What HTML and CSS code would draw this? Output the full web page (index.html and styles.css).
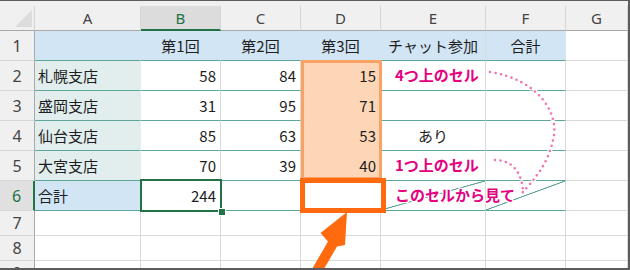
FILE: index.html
```html
<!DOCTYPE html>
<html lang="ja">
<head>
<meta charset="utf-8">
<title>Sheet</title>
<link rel="stylesheet" href="styles.css">
</head>
<body>
<div class="sheet">
  <div class="grid">
    <div class="strip"></div>

    <div class="corner"><svg class="tri" width="17" height="17" viewBox="0 0 17 17"><polygon points="17,0 17,17 0,17" fill="#dcdcdc"/></svg></div>
    <div class="ch">A</div>
    <div class="ch sel">B</div>
    <div class="ch">C</div>
    <div class="ch">D</div>
    <div class="ch">E</div>
    <div class="ch">F</div>
    <div class="ch">G</div>

    <div class="rh">1</div>
    <div class="c hd"></div>
    <div class="c hd ctr">第1回</div>
    <div class="c hd ctr">第2回</div>
    <div class="c hd ctr">第3回</div>
    <div class="c hd ctr">チャット参加</div>
    <div class="c hd ctr">合計</div>
    <div class="c"></div>

    <div class="rh">2</div>
    <div class="c br">札幌支店</div>
    <div class="c tl num">58</div>
    <div class="c tl num">84</div>
    <div class="c pe num">15</div>
    <div class="c tl"><span class="note">4つ上のセル</span></div>
    <div class="c tl"></div>
    <div class="c"></div>

    <div class="rh">3</div>
    <div class="c br">盛岡支店</div>
    <div class="c tl num">31</div>
    <div class="c tl num">95</div>
    <div class="c pe num">71</div>
    <div class="c tl"></div>
    <div class="c tl"></div>
    <div class="c"></div>

    <div class="rh">4</div>
    <div class="c br">仙台支店</div>
    <div class="c tl num">85</div>
    <div class="c tl num">63</div>
    <div class="c pe num">53</div>
    <div class="c tl ctr">あり</div>
    <div class="c tl"></div>
    <div class="c"></div>

    <div class="rh">5</div>
    <div class="c br">大宮支店</div>
    <div class="c tl num">70</div>
    <div class="c tl num">39</div>
    <div class="c pe num">40</div>
    <div class="c tl"><span class="note">1つ上のセル</span></div>
    <div class="c tl"></div>
    <div class="c"></div>

    <div class="rh sel">6</div>
    <div class="c tot">合計</div>
    <div class="c tl num">244</div>
    <div class="c tl"></div>
    <div class="c tl"></div>
    <div class="c tl diag"><span class="note">このセルから見て</span></div>
    <div class="c tl diag"></div>
    <div class="c"></div>

    <div class="rh">7</div>
    <div class="c"></div><div class="c"></div><div class="c"></div><div class="c"></div><div class="c"></div><div class="c"></div><div class="c"></div>

    <div class="rh">8</div>
    <div class="c"></div><div class="c"></div><div class="c"></div><div class="c"></div><div class="c"></div><div class="c"></div><div class="c"></div>

    <div class="rh">9</div>
    <div class="c"></div><div class="c"></div><div class="c"></div><div class="c"></div><div class="c"></div><div class="c"></div><div class="c"></div>
  </div>

  <div class="overlay">
    <div class="range"></div>
    <div class="target"></div>
    <div class="active"><span class="handle"></span></div>
    <svg class="marks" width="630" height="270" viewBox="0 0 630 270">
      <g fill="none" stroke-linecap="round" stroke-dasharray="0 5.5">
        <path d="M490,72 C540,80 560,115 553,140 C548,165 532,182 522,193" stroke="#fff" stroke-width="5"/>
        <path d="M495,160 C512,160 522,172 523,192" stroke="#fff" stroke-width="5"/>
        <path d="M490,72 C540,80 560,115 553,140 C548,165 532,182 522,193" stroke="#ef74b1" stroke-width="2.6"/>
        <path d="M495,160 C512,160 522,172 523,192" stroke="#ef74b1" stroke-width="2.6"/>
      </g>
      <polygon points="347,212 345,245 337,246.5 317,281 308,276 328,241.5 320.5,233" fill="#ff6a0e"/>
    </svg>
  </div>
</div>
</body>
</html>
```

FILE: styles.css
```css
* {
  box-sizing: border-box;
}

body {
  margin: 0;
  background: #ffffff;
}

.sheet {
  position: relative;
  width: 630px;
  height: 270px;
  border-top: 1px solid #5c5c5c;
  border-right: 2px solid #5c5c5c;
  border-bottom: 2px solid #5c5c5c;
  overflow: hidden;
  background: #ffffff;
  font-family: "Noto Sans CJK JP", "Noto Sans", sans-serif;
}

.grid {
  display: grid;
  grid-template-columns: 35px 106px 80px 80px 80px 105px 80px 62px;
  grid-template-rows: 5px 25px repeat(6, 30px) 25px 25px 25px;
}

.strip {
  grid-column: 1 / -1;
  background: #f0f0f0;
}

.corner {
  display: flex;
  align-items: flex-start;
  background: #f0f0f0;
  border-right: 1px solid #d4d4d4;
  border-bottom: 1px solid #a8a8a8;
}

.tri {
  display: block;
  margin: 4px 0 0 15px;
}

.ch {
  display: flex;
  align-items: center;
  justify-content: center;
  background: #f0f0f0;
  border-right: 1px solid #d6d6d6;
  border-bottom: 1px solid #a8a8a8;
  font-family: "Noto Sans", "Open Sans", sans-serif;
  font-size: 15px;
  color: #444444;
}

.ch.sel {
  background: #dcdcdc;
  color: #217346;
  border-bottom: 2px solid #217346;
}

.rh {
  display: flex;
  align-items: center;
  justify-content: center;
  background: #f0f0f0;
  border-right: 1px solid #a8a8a8;
  border-bottom: 1px solid #d6d6d6;
  font-family: "Noto Sans", "Open Sans", sans-serif;
  font-size: 16px;
  color: #444444;
}

.rh.sel {
  background: #e0e0e0;
  color: #217346;
  border-right: 2px solid #217346;
}

.c {
  display: flex;
  align-items: center;
  padding: 0 4px;
  border-right: 1px solid #dadada;
  border-bottom: 1px solid #dadada;
  font-size: 15px;
  color: #1e1e1e;
  white-space: nowrap;
}

.num {
  justify-content: flex-end;
}

.ctr {
  justify-content: center;
}

.hd {
  background: #d1e5f5;
  border-right-color: #d1e5f5;
  border-bottom-color: #5ea69a;
}

.hd:nth-child(7n + 8) {
  border-right-color: #dadada;
}

.tl {
  border-bottom-color: #5ea69a;
}

.br {
  background: #e1eeed;
  border-right-color: #e1eeed;
  border-bottom-color: #5ea69a;
  padding-left: 3px;
}

.tot {
  background: #d1e5f5;
  border-right-color: #d1e5f5;
  border-bottom-color: #5ea69a;
  padding-left: 3px;
}

.pe {
  background: #fdd6b7;
  border-right-color: #fdd6b7;
  border-bottom-color: #fdd6b7;
}

.diag {
  background: linear-gradient(to top left,
    transparent calc(50% - 0.8px),
    #5ea69a calc(50% - 0.3px),
    #5ea69a calc(50% + 0.3px),
    transparent calc(50% + 0.8px));
}

.note {
  position: relative;
  z-index: 2;
  margin-left: 10px;
  margin-top: -3px;
  font-weight: 700;
  font-size: 15px;
  color: #e4007f;
  text-shadow: 1px 0 0 #fff, -1px 0 0 #fff, 0 1px 0 #fff, 0 -1px 0 #fff,
    1px 1px 0 #fff, -1px -1px 0 #fff, 1px -1px 0 #fff, -1px 1px 0 #fff,
    0 0 3px #fff;
}

.overlay {
  position: absolute;
  top: -1px;
  left: 0;
  width: 630px;
  height: 270px;
  pointer-events: none;
}

.range {
  position: absolute;
  left: 301px;
  top: 60px;
  width: 81px;
  height: 120px;
  border: 3px solid #f8a266;
}

.target {
  position: absolute;
  left: 300px;
  top: 178px;
  width: 86px;
  height: 35px;
  border: 5px solid #ff6a0e;
  background: #ffffff;
}

.active {
  position: absolute;
  left: 140px;
  top: 179px;
  width: 82px;
  height: 33px;
  border: 2px solid #217346;
}

.handle {
  position: absolute;
  right: -5px;
  bottom: -5px;
  width: 6px;
  height: 6px;
  background: #217346;
  box-shadow: 0 0 0 1px #ffffff;
}

.marks {
  position: absolute;
  top: 0;
  left: 0;
}
```
